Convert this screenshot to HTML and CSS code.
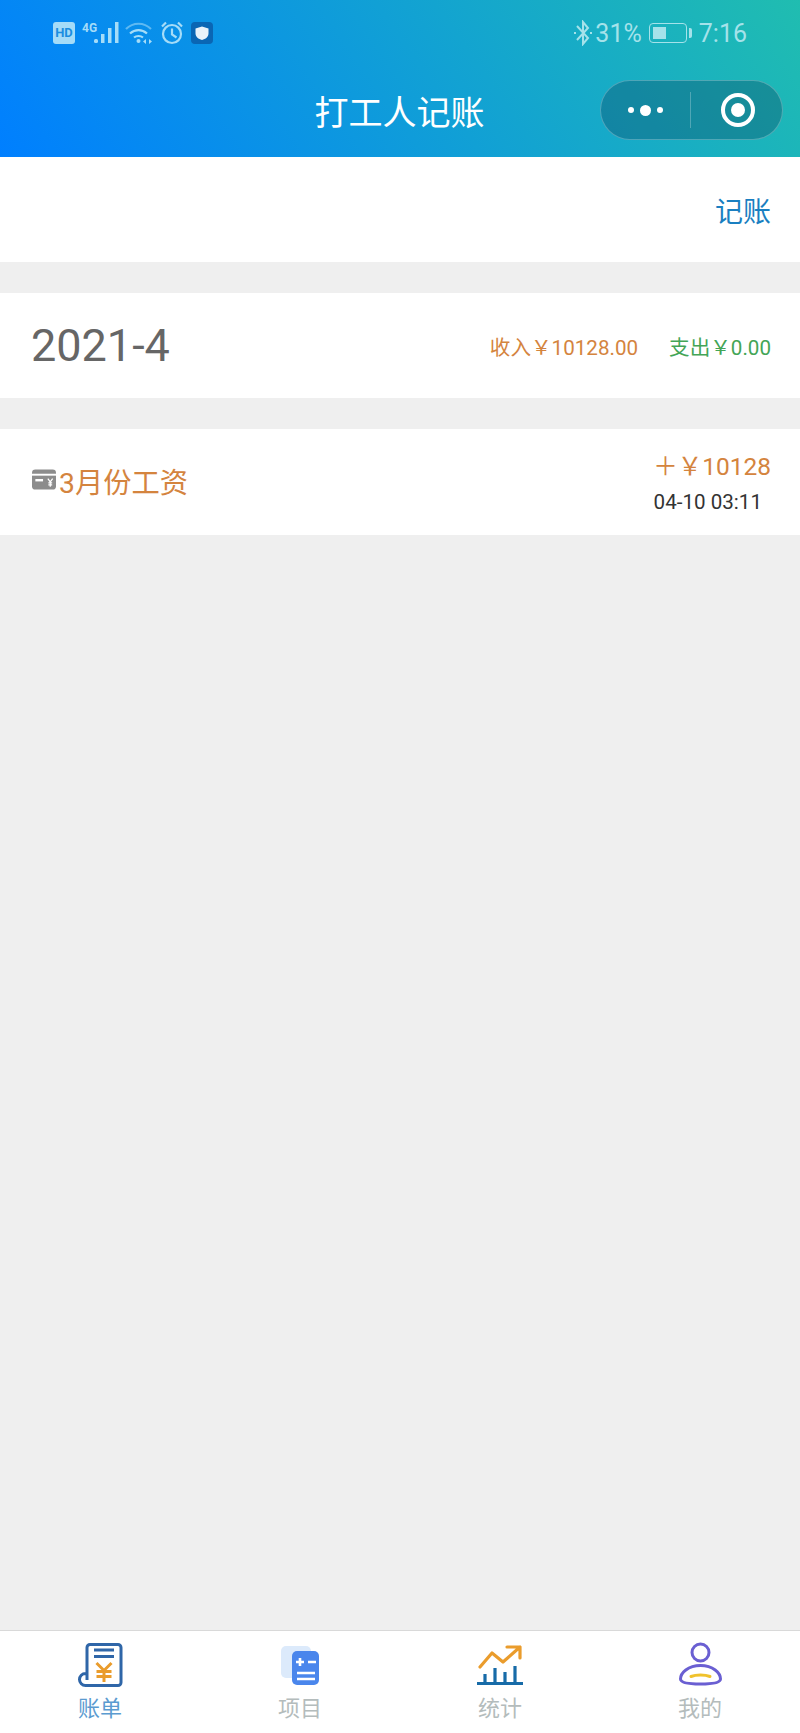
FILE: index.html
```html
<!DOCTYPE html>
<html lang="zh-CN">

<head>
    <meta charset="UTF-8">
    <meta name="viewport" content="width=device-width, initial-scale=1.0">
    <title>打工人记账</title>
    <link rel="stylesheet" href="styles.css">
</head>

<body>
    <header class="top">
        <div class="status">
            <div class="status-left">
                <span class="hd">HD</span>
                <span class="net">
                    <span class="net-label">4G</span>
                    <svg width="26" height="24" viewBox="0 0 26 24">
                        <g fill="#a5dcf8">
                            <rect x="1" y="18" width="4" height="4" rx="1.5"/>
                            <rect x="8" y="13" width="3.5" height="9"/>
                            <rect x="15" y="7" width="3.5" height="15"/>
                            <rect x="22" y="1" width="3.5" height="21"/>
                        </g>
                    </svg>
                </span>
                <svg class="wifi" width="28" height="24" viewBox="0 0 28 24" fill="none" stroke="#a5dcf8" stroke-width="2.2">
                    <path d="M1 8C8 1 19 1 26 8" opacity=".55"/>
                    <path d="M5 12.5C10 8 17 8 22 12.5"/>
                    <path d="M9 16.5C11.5 14.5 15.5 14.5 18 16.5"/>
                    <circle cx="13.5" cy="20" r="2" fill="#a5dcf8" stroke="none"/>
                    <path d="M21 18v5l-3-2.5zM24 18v5l3-2.5z" fill="#a5dcf8" stroke="none"/>
                </svg>
                <svg width="24" height="24" viewBox="0 0 24 24" fill="none" stroke="#a5dcf8" stroke-width="2.2">
                    <circle cx="12" cy="13" r="9"/>
                    <path d="M12 7.5V13.5L16.5 16.5"/>
                    <path d="M2 5.5L6 1.5M22 5.5L18 1.5"/>
                </svg>
                <svg width="22" height="22" viewBox="0 0 22 22">
                    <rect width="22" height="22" rx="4" fill="#0a66b4"/>
                    <path d="M11 4.5L17.5 6.5V11C17.5 15 14.5 17 11 18C7.5 17 4.5 15 4.5 11V6.5Z" fill="#e9f2fa"/>
                </svg>
            </div>
            <div class="status-right">
                <svg class="bt" width="20" height="26" viewBox="0 0 20 26" fill="none" stroke="#a5e2ea" stroke-width="2">
                    <path d="M4 6L15 18L10 24V2L15 8L4 20"/>
                    <path d="M1 13h2M17 13h2"/>
                </svg>
                <span>31%</span>
                <span class="battery"><span class="battery-fill"></span></span>
                <span class="battery-tip"></span>
                <span class="clock">7:16</span>
            </div>
        </div>
        <nav class="nav">
            <span></span>
            <h1 class="title">打工人记账</h1>
            <div class="capsule">
                <div class="capsule-part">
                    <span class="dot"></span>
                    <span class="dot dot-big"></span>
                    <span class="dot"></span>
                </div>
                <div class="capsule-part capsule-right">
                    <span class="target"><span class="target-in"></span></span>
                </div>
            </div>
        </nav>
    </header>

    <main class="main">
        <section class="row row-action">
            <span class="add">记账</span>
        </section>

        <section class="row">
            <span class="month">2021-4</span>
            <div class="totals">
                <span class="orange">收入￥10128.00</span>
                <span class="green">支出￥0.00</span>
            </div>
        </section>

        <section class="row row-bill">
            <div class="bill-name">
                <svg class="card" width="24" height="21" viewBox="0 0 25 21">
                    <rect x="0" y="0" width="25" height="21" rx="3.5" fill="#8c8c8c"/>
                    <rect x="0" y="4.5" width="25" height="2" fill="#fff"/>
                    <rect x="3.5" y="10" width="8" height="2.5" fill="#fff"/>
                    <path d="M16.5 9.5L19 13L21.5 9.5M19 13V18M17 14h4M17 16h4" fill="none" stroke="#fff" stroke-width="1.3"/>
                </svg>
                <span class="orange">3月份工资</span>
            </div>
            <div class="bill-info">
                <span class="amount orange">＋￥10128</span>
                <span class="time">04-10 03:11</span>
            </div>
        </section>
    </main>

    <footer class="tabs">
        <div class="tab tab-on">
            <svg width="48" height="48" viewBox="0 0 48 48" fill="none">
                <path d="M11 38V5.5a3 3 0 0 1 3-3H42a3 3 0 0 1 3 3V40.5a3 3 0 0 1-3 3H9.5a6 6 0 0 1 0-12H11" stroke="#2f66a8" stroke-width="3"/>
                <path d="M18 8H38M18 14.5H38" stroke="#2f66a8" stroke-width="3"/>
                <path d="M20.5 21L28 28.5L35.5 21M28 28.5V40M20.5 29.5H35.5M20.5 34.5H35.5" stroke="#ea9c2c" stroke-width="3"/>
            </svg>
            <span>账单</span>
        </div>
        <div class="tab">
            <svg width="48" height="48" viewBox="0 0 48 48">
                <rect x="5" y="4" width="30" height="32" rx="5" fill="#dceafb"/>
                <rect x="16" y="9" width="27" height="34" rx="5" fill="#4a86ec"/>
                <path d="M20 20H28M24 16V24M32 20H40M21 31H39M21 37H39" stroke="#fff" stroke-width="2.6"/>
            </svg>
            <span>项目</span>
        </div>
        <div class="tab">
            <svg width="48" height="48" viewBox="0 0 48 48" fill="none">
                <path d="M4 25L16 11L27 20L44 5M31 5H44V16" stroke="#ea9c2c" stroke-width="3.2" stroke-linejoin="round" stroke-linecap="round"/>
                <path d="M1 41.5H47" stroke="#176ba8" stroke-width="3"/>
                <path d="M9 41V32M19 41V26M29 41V30M39 41V24" stroke="#176ba8" stroke-width="3.2"/>
            </svg>
            <span>统计</span>
        </div>
        <div class="tab">
            <svg width="48" height="48" viewBox="0 0 48 48" fill="none">
                <circle cx="24.5" cy="10.5" r="8.5" stroke="#6a5fd2" stroke-width="3"/>
                <path d="M24.5 23.5C12 23.5 4.5 31 4.5 37C4.5 40.5 12 42 24.5 42C37 42 44.5 40.5 44.5 37C44.5 31 37 23.5 24.5 23.5Z" stroke="#6a5fd2" stroke-width="3"/>
                <path d="M15 34.5C20 32.5 29 32.5 34 34.5" stroke="#f0c22c" stroke-width="3" stroke-linecap="round"/>
            </svg>
            <span>我的</span>
        </div>
    </footer>
</body>

</html>
```

FILE: styles.css
```css
* {
    box-sizing: border-box;
}

body {
    display: flex;
    flex-direction: column;
    height: 100vh;
    margin: 0;
    background: #efefef;
    font-family: Roboto, "Noto Sans CJK SC", sans-serif;
}

.top {
    height: 157px;
    background: linear-gradient(55deg, #007fff 0%, #20bdb0 100%);
}

.status {
    display: flex;
    justify-content: space-between;
    align-items: center;
    height: 66px;
    padding: 0 53px;
}

.status-left {
    display: flex;
    align-items: center;
    gap: 7px;
}

.status-right {
    display: flex;
    align-items: center;
    gap: 4px;
    font-size: 25px;
    color: #a5e2ea;
}

.bt {
    margin-right: -2px;
}

.hd {
    width: 22px;
    height: 22px;
    border-radius: 3px;
    background: #a5dcf8;
    color: #1b8ee0;
    font-size: 13px;
    font-weight: 700;
    line-height: 22px;
    text-align: center;
}

.net {
    display: flex;
    align-items: flex-start;
}

.net-label {
    margin-right: -4px;
    color: #a5dcf8;
    font-size: 12px;
    font-weight: 700;
    line-height: 14px;
}

.wifi {
    margin-left: -1px;
}

.battery {
    display: block;
    width: 38px;
    height: 20px;
    margin-left: 3px;
    padding: 3px;
    border: 1px solid #a5e2ea;
    border-radius: 4px;
}

.battery-fill {
    display: block;
    width: 13px;
    height: 100%;
    background: #a5e2ea;
}

.battery-tip {
    width: 3px;
    height: 10px;
    margin-left: -2px;
    border-radius: 0 2px 2px 0;
    background: #a5e2ea;
}

.clock {
    margin-left: 3px;
}

.nav {
    display: grid;
    grid-template-columns: 1fr auto 1fr;
    align-items: center;
    height: 60px;
    margin-top: 14px;
    padding: 0 17px 0 16px;
}

.title {
    margin: 0;
    color: #fff;
    font-size: 34px;
    font-weight: 400;
}

.capsule {
    display: flex;
    justify-self: end;
    width: 183px;
    height: 60px;
    border: 1px solid rgba(255, 255, 255, 0.25);
    border-radius: 30px;
    background: rgba(10, 50, 80, 0.3);
}

.capsule-part {
    display: flex;
    flex: 1;
    justify-content: center;
    align-items: center;
    gap: 6px;
}

.capsule-right {
    position: relative;
    padding-left: 4px;
}

.capsule-right::before {
    content: "";
    position: absolute;
    left: 0;
    top: 11px;
    bottom: 11px;
    width: 1px;
    background: rgba(255, 255, 255, 0.25);
}

.dot {
    width: 6px;
    height: 6px;
    border-radius: 50%;
    background: #fff;
}

.dot-big {
    width: 11px;
    height: 11px;
}

.target {
    display: flex;
    justify-content: center;
    align-items: center;
    width: 34px;
    height: 34px;
    border: 4px solid #fff;
    border-radius: 50%;
}

.target-in {
    width: 14px;
    height: 14px;
    border-radius: 50%;
    background: #fff;
}

.main {
    flex: 1;
}

.row {
    display: flex;
    justify-content: space-between;
    align-items: center;
    height: 105px;
    margin-bottom: 31px;
    padding: 0 29px 0 31px;
    background: #fff;
}

.row-action {
    justify-content: flex-end;
}

.row-bill {
    height: 106px;
}

.add {
    color: #1a7fc1;
    font-size: 28px;
}

.month {
    color: #666;
    font-size: 45px;
}

.totals {
    display: flex;
    gap: 31px;
    font-size: 20.6px;
}

.orange {
    color: #d4843e;
}

.green {
    color: #43a556;
}

.bill-name {
    display: flex;
    align-items: center;
    gap: 3px;
    padding-bottom: 3px;
    padding-left: 1px;
    font-size: 28.3px;
}

.card {
    margin-bottom: 2px;
}

.bill-info {
    display: flex;
    flex-direction: column;
    align-items: flex-end;
    gap: 8px;
    padding-bottom: 3px;
}

.amount {
    font-size: 24.5px;
}

.time {
    margin-right: 9px;
    color: #333;
    font-size: 20.6px;
}

.tabs {
    display: grid;
    grid-template-columns: repeat(4, 1fr);
    height: 103px;
    border-top: 1px solid #d9d9d9;
    background: #fff;
}

.tab {
    display: flex;
    flex-direction: column;
    align-items: center;
    gap: 4px;
    padding-top: 11px;
    color: #b4bcbc;
    font-size: 22px;
    line-height: 30px;
}

.tab-on {
    color: #5b9bd0;
}
```
